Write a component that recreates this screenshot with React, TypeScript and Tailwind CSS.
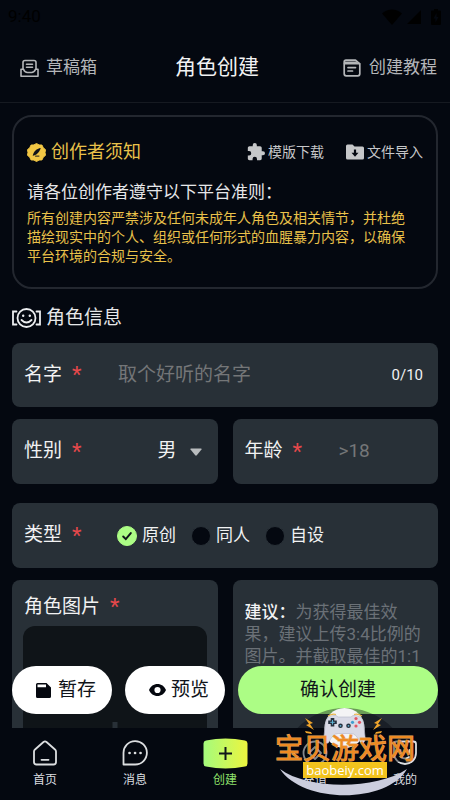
import { useState } from 'react';
import type { ReactNode } from 'react';

const TYPES = ['原创', '同人', '自设'];

function Required() {
  return <span className="ml-2.5 text-[22px] leading-6 text-[#e5484b]">*</span>;
}

function StatusBar() {
  return (
    <div className="flex h-[34px] shrink-0 items-center justify-between px-2 text-[17px] text-black">
      <span>9:40</span>
      <div className="flex items-center gap-1">
        <svg className="h-4 w-5" viewBox="0 0 20 16" fill="currentColor">
          <path d="M0 4.5C6-.8 14-.8 20 4.5L10 16z" />
        </svg>
        <svg className="h-4 w-4" viewBox="0 0 16 16" fill="currentColor">
          <path d="M15 1v14H1z" />
        </svg>
        <svg className="ml-1 h-4 w-3" viewBox="0 0 12 16" fill="currentColor">
          <path fillRule="evenodd" d="M4 0h4v1.500h2q1 0 1 1V15q0 1-1 1H2q-1 0-1-1V2.500q0-1 1-1h2zM6.500 4 3.500 9.500h2V13.500L8.500 8h-2z" />
        </svg>
      </div>
    </div>
  );
}

function Header() {
  return (
    <header className="flex h-[69px] shrink-0 items-center justify-between border-b border-[#161a21] pl-5 pr-[13px]">
      <button className="flex items-center gap-[7px] text-[17px] text-[#b4b6b9]">
        <svg className="size-[19px]" viewBox="0 0 19 19" fill="none" stroke="currentColor" strokeWidth="1.6" strokeLinejoin="round" strokeLinecap="round">
          <path d="M3 10V3.500Q3 1.500 5 1.500h9q2 0 2 2V10" />
          <path d="M3.500 10.200H1v7h17v-7h-2.500q-1.200 3.300-4 3.300h-4q-2.800 0-4-3.300z" />
          <path d="M6.500 5.200h6M6.500 8.200h6" />
        </svg>
        草稿箱
      </button>
      <h1 className="mr-1.5 text-[21px] text-[#f1f2f3]">角色创建</h1>
      <button className="flex items-center gap-2 text-[17px] text-[#b4b6b9]">
        <svg className="size-[18px]" viewBox="0 0 18 18" fill="none" stroke="currentColor" strokeWidth="1.7" strokeLinejoin="round" strokeLinecap="round">
          <path d="M3 1.200h9.500l4.300 3.600V14.800q0 2-2 2H3.200q-2 0-2-2V3Q1.200 1.200 3 1.200z" />
          <path d="M1.500 4.600h15M5 8.600h7.500M5 12h4.500" />
          <path d="M2 2.500h11l2.500 2H2z" fill="currentColor" stroke="none" />
        </svg>
        创建教程
      </button>
    </header>
  );
}

function Notice() {
  return (
    <section className="rounded-[20px] border-2 border-[#23272f] px-[13px] pt-[23px] pb-[21px]">
      <div className="flex h-6 items-center">
        <svg className="size-[19px]" viewBox="0 0 20 20">
          <path
            d="M10 .5 12.700 2l3.100.2 1.300 2.800 2.400 2-.5 3 .5 3-2.400 2-1.300 2.800-3.100.2L10 19.500 7.300 18l-3.100-.2L2.900 15 .5 13l.5-3-.5-3 2.400-2 1.300-2.800L7.300 2z"
            fill="#f2c744"
            stroke="#f2c744"
            strokeLinejoin="round"
          />
          <path d="M14.500 5.200C10 6 7 8.500 6 13.500c3.500-.6 6.800-3 8.500-8.300z" fill="#11141a" />
          <path d="M8.500 13.800h4.500" stroke="#11141a" strokeWidth="1" />
        </svg>
        <h2 className="ml-[5px] text-lg leading-6 text-[#e9c14a]">创作者须知</h2>
        <button className="ml-auto flex items-center gap-[3px] text-sm text-[#c6c7c9]">
          <svg className="size-[18px]" viewBox="1 1 22 22" fill="currentColor">
            <path d="M20.500 11H19V7c0-1.100-.9-2-2-2h-4V3.500a2.500 2.500 0 0 0-5 0V5H4c-1.100 0-2 .9-2 2v3.800h1.500a2.700 2.700 0 0 1 0 5.400H2V20c0 1.100.9 2 2 2h3.800v-1.500a2.700 2.700 0 0 1 5.400 0V22H17c1.100 0 2-.9 2-2v-4h1.500a2.500 2.500 0 0 0 0-5z" />
          </svg>
          模版下载
        </button>
        <button className="ml-[22px] flex items-center gap-[3px] text-sm text-[#c6c7c9]">
          <svg className="h-4 w-[18px]" viewBox="0 0 18 16" fill="currentColor">
            <path
              fillRule="evenodd"
              d="M1.500.5h5l2 2h8Q18 2.500 18 4v10q0 1.500-1.500 1.500h-15Q0 15.500 0 14V2Q0 .5 1.500.5zM7.900 5.500v3.200H5.500L9 12.800l3.500-4.100h-2.400V5.500z"
            />
          </svg>
          文件导入
        </button>
      </div>
      <p className="mt-4 text-[17px] leading-6 text-[#e6e7e9]">请各位创作者遵守以下平台准则：</p>
      <p className="mt-[5px] pr-3 text-sm leading-[19px] text-[#e9c14a]">
        所有创建内容严禁涉及任何未成年人角色及相关情节，并杜绝描绘现实中的个人、组织或任何形式的血腥暴力内容，以确保平台环境的合规与安全。
      </p>
    </section>
  );
}

function InfoForm() {
  const [name, setName] = useState('');
  const [type, setType] = useState(TYPES[0]);

  return (
    <form className="mt-[13px] text-[19px] text-[#f1f2f3]">
      <div className="flex h-16 items-center rounded-lg bg-[#283037] pl-3 pr-[15px]">
        <label htmlFor="name" className="flex w-[94px] shrink-0 items-center">
          名字
          <Required />
        </label>
        <input
          id="name"
          value={name}
          maxLength={10}
          onChange={(e) => setName(e.target.value)}
          placeholder="取个好听的名字"
          className="min-w-0 flex-1 bg-transparent outline-none placeholder:text-[#747678]"
        />
        <span className="text-[15px]">{name.length}/10</span>
      </div>

      <div className="mt-3 grid grid-cols-2 gap-[15px]">
        <div className="flex h-[65px] items-center rounded-lg bg-[#283037] px-3">
          <label htmlFor="gender" className="flex items-center">
            性别
            <Required />
          </label>
          <div className="ml-auto grid items-center">
            <select id="gender" className="col-start-1 row-start-1 w-12 appearance-none bg-transparent pr-6 outline-none">
              <option>男</option>
              <option>女</option>
            </select>
            <svg className="pointer-events-none col-start-1 row-start-1 mr-1 h-2 w-3 justify-self-end" viewBox="0 0 12 8" fill="#b9bcbe">
              <path d="M1 .5h10q1 .2.500 1L6.800 7.300q-.8.800-1.600 0L.5 1.500Q0 .7 1 .5z" />
            </svg>
          </div>
        </div>
        <div className="flex h-[65px] items-center rounded-lg bg-[#283037] px-3">
          <label htmlFor="age" className="flex w-[94px] shrink-0 items-center">
            年龄
            <Required />
          </label>
          <input
            id="age"
            inputMode="numeric"
            placeholder=">18"
            className="min-w-0 flex-1 bg-transparent outline-none placeholder:text-[#747678]"
          />
        </div>
      </div>

      <div role="radiogroup" aria-labelledby="type-label" className="mt-[19px] flex h-[65px] items-center rounded-lg bg-[#283037] px-3">
        <div id="type-label" className="flex w-[93px] shrink-0 items-center">
          类型
          <Required />
        </div>
        <div className="flex gap-[15px] text-[17px]">
          {TYPES.map((item) => (
            <label key={item} className="flex items-center gap-[5px]">
              <span className="relative flex">
                <input
                  type="radio"
                  name="type"
                  value={item}
                  checked={type === item}
                  onChange={() => setType(item)}
                  className="size-5 appearance-none rounded-full border border-[#283037] bg-[#040810] checked:border-[#acfd85] checked:bg-[#acfd85]"
                />
                {type === item && (
                  <svg className="pointer-events-none absolute inset-0 size-5" viewBox="0 0 20 20" fill="none" stroke="#10161a" strokeWidth="2" strokeLinecap="round">
                    <path d="m6.200 10.500 2.600 2.600 5-6" />
                  </svg>
                )}
              </span>
              {item}
            </label>
          ))}
        </div>
      </div>

      <div className="mt-3 grid grid-cols-2 gap-[15px]">
        <div className="rounded-lg bg-[#283037] px-[11px] pt-[15px] pb-3">
          <div className="flex h-6 items-center pl-px">
            角色图片
            <Required />
          </div>
          <button
            type="button"
            aria-label="上传图片"
            className="mt-[7px] flex aspect-3/4 w-full items-center justify-center rounded-xl bg-[#0f1418]"
          >
            <svg className="size-[52px]" viewBox="0 0 52 52" stroke="#283037" strokeWidth="5">
              <path d="M26 0v52M0 26h52" />
            </svg>
          </button>
        </div>
        <p className="rounded-lg bg-[#283037] px-3 pt-[21px] text-[17px] leading-[22px] text-[#6b7177]">
          <b className="font-medium text-[#f1f2f3]">建议：</b>
          为获得最佳效果，建议上传3:4比例的图片。并截取最佳的1:1
        </p>
      </div>
    </form>
  );
}

function ActionBar() {
  return (
    <div className="absolute inset-x-3 bottom-3.5 grid grid-cols-[1fr_1fr_2fr] gap-[13px] text-[19px] text-[#10141a]">
      <button className="flex h-12 items-center justify-center gap-[7px] rounded-full bg-white pl-2">
        <svg className="size-[15px]" viewBox="0 0 15 15" fill="#05080f">
          <path fillRule="evenodd" d="M1.500 0h9L15 4.500v9q0 1.500-1.500 1.500h-12Q0 15 0 13.500v-12Q0 0 1.500 0zM1.500 1.500v2.800h8.500V1.500z" />
        </svg>
        暂存
      </button>
      <button className="flex h-12 items-center justify-center gap-[5px] rounded-full bg-white pl-2">
        <svg className="h-3 w-[17px]" viewBox="0 0 17 12" fill="#05080f">
          <path fillRule="evenodd" d="M8.500 0C4.800 0 1.500 2.300 0 6c1.500 3.700 4.800 6 8.500 6s7-2.300 8.500-6c-1.500-3.700-4.800-6-8.500-6zm0 2.900a3.100 3.100 0 1 1 0 6.200 3.100 3.100 0 0 1 0-6.200z" />
        </svg>
        预览
      </button>
      <button className="h-12 rounded-full bg-[#acfd85]">确认创建</button>
    </div>
  );
}

function Tab({ label, active, children }: { label: string; active?: boolean; children: ReactNode }) {
  return (
    <a href="#" className={active ? 'flex flex-1 flex-col items-center text-[#8fe26c]' : 'flex flex-1 flex-col items-center text-[#dcdee0]'}>
      <span className="flex h-11 items-center justify-center pt-1.5">{children}</span>
      <span className="text-xs leading-4">{label}</span>
    </a>
  );
}

function TabBar() {
  return (
    <nav className="flex h-[72px] shrink-0">
      <Tab label="首页">
        <svg className="size-[26px]" viewBox="0 0 26 26" fill="none" stroke="currentColor" strokeWidth="1.8" strokeLinejoin="round" strokeLinecap="round">
          <path d="M2 11.500q0-1.200 1-2L11.500 2q1.500-1.200 3 0L23 9.500q1 .8 1 2V22q0 2.500-2.500 2.500h-17Q2 24.500 2 22z" />
          <path d="M9.500 19.800h7" />
        </svg>
      </Tab>
      <Tab label="消息">
        <svg className="size-[26px]" viewBox="0 0 26 26" fill="none" stroke="currentColor" strokeWidth="1.800" strokeLinejoin="round">
          <path d="M1.500 24.500V13A11.700 11.700 0 1 1 13.200 24.500z" />
          <path d="M7.500 13h.1M13 13h.1M18.500 13h.1" strokeWidth="2.600" strokeLinecap="round" />
        </svg>
      </Tab>
      <Tab label="创建" active>
        <svg className="h-[31px] w-[45px]" viewBox="0 0 45 31">
          <defs>
            <linearGradient id="create" x1="0" x2="1" y1="0" y2="0">
              <stop offset="0" stopColor="#a5fb7c" />
              <stop offset="1" stopColor="#ecf53f" />
            </linearGradient>
          </defs>
          <path d="M3 2.500Q22.500-1.500 42 2.500q2.500.5 2.500 3v20q0 2.500-2.500 3-19.500 4-39 0-2.500-.5-2.500-3v-20q0-2.500 2.500-3z" fill="url(#create)" />
          <path d="M22.500 9v13M16 15.500h13" stroke="#10161a" strokeWidth="2" />
        </svg>
      </Tab>
      <Tab label="充值">
        <svg className="size-[26px]" viewBox="0 0 26 26" fill="none" stroke="currentColor" strokeWidth="1.800" strokeLinejoin="round">
          <circle cx="13" cy="13" r="11.500" />
          <path d="m13 7 6 6-6 6-6-6z" />
        </svg>
      </Tab>
      <Tab label="我的">
        <svg className="size-[26px]" viewBox="0 0 26 26" fill="none" stroke="currentColor" strokeWidth="1.800" strokeLinecap="round" strokeLinejoin="round">
          <path d="M2 4q0-2.500 2.500-2.500h17Q24 1.500 24 4v9a11 11 0 0 1-22 0z" />
          <path d="M8.500 10v2.500M17.500 10v2.500M9 17q4 3 8 0" />
        </svg>
      </Tab>
    </nav>
  );
}

// site badge floating over the bottom right corner
function SiteBadge() {
  return (
    <a href="#" className="absolute right-[34px] bottom-1 flex w-[142px] flex-col items-center">
      <svg className="pointer-events-none absolute bottom-0 left-0 h-[92px] w-[142px]" viewBox="0 0 142 92">
        <path d="M10 58a61 54 0 0 1 122 0z" fill="#05080f" fillOpacity=".4" />
        <circle cx="70.500" cy="24" r="20" fill="#f4f4f5" />
        <path
          d="M55 13q3-2 7-1.500l2 1.500h13l2-1.500q4-.5 7 1.500 3 1.500 3.800 8l1.400 13q0 6-4.500 5-2.500-5-5-7.500-2-2-5-2h-12.400q-3 0-5 2-2.500 2.500-5 7.500-4.500 1-4.500-5l1.400-13q.8-6.500 3.800-8z"
          fill="#d9dae6"
          stroke="#b3b5c6"
          strokeWidth=".6"
        />
        <path d="M54 12q4-2.500 8-1.500M80 10.500q4-1 8 1.500" fill="none" stroke="#e9b64a" strokeWidth="1.200" />
        <path d="M58.500 14v8.600M54.200 18.300h8.600" stroke="#26313f" strokeWidth="3.600" />
        <path d="M58.500 16v4.600M56.200 18.300h4.600" stroke="#5fb3d4" strokeWidth="1" />
        <circle cx="66.500" cy="21.800" r="2.300" fill="#26313f" />
        <circle cx="74.500" cy="21.800" r="2.300" fill="#26313f" />
        <circle cx="66.500" cy="21.800" r=".9" fill="#5fb3d4" />
        <circle cx="74.500" cy="21.800" r=".9" fill="#5fb3d4" />
        <circle cx="82" cy="14.500" r="1.600" fill="#e25563" />
        <circle cx="82" cy="22" r="1.600" fill="#e25563" />
        <circle cx="78.500" cy="18.300" r="1.600" fill="#3f9fd0" />
        <circle cx="85.500" cy="18.300" r="1.600" fill="#e25563" />
        <path d="m31 14 8 5-3 1 4 6-8-5 3-1zM108 14l-8 5 3 1-4 6 8-5-3-1zM31 27l6 1 1 2-6-1zM108 27l-6 1-1 2 6-1z" fill="#f0a52c" />
        <path d="M6 65c28 21 96 21 127 0-20 35-104 35-127 0z" fill="#cbcddd" />
      </svg>
      <span className="relative text-[28px] leading-6 whitespace-nowrap text-[#ee8a22] [paint-order:stroke_fill] [-webkit-text-stroke:1px_#e9a45a]">
        宝贝游戏网
      </span>
      <span className="relative mb-[18px] bg-[#f2c31d] px-[3px] font-[Open_Sans] text-[13px] leading-4 font-medium text-white">
        baobeiy.com
      </span>
    </a>
  );
}

export default function App() {
  return (
    <div className="relative flex h-dvh flex-col overflow-hidden bg-[#040810] font-[Roboto,'Noto_Sans_CJK_SC',sans-serif]">
      <StatusBar />
      <Header />
      <div className="relative min-h-0 flex-1">
        <main className="h-full overflow-y-auto px-3 pt-3 [scrollbar-width:none]">
          <Notice />
          <div className="mt-[17px] flex h-6 items-center gap-[5px]">
            <svg className="h-5 w-[29px]" viewBox="0 0 29 20" fill="none" stroke="#eceef0" strokeWidth="1.800" strokeLinecap="round">
              <path d="M4.500 3.500H1V16.500H4.500M24.500 3.500H28V16.500H24.500" />
              <circle cx="14.500" cy="10" r="9" />
              <path d="M9.500 12q5 5 10 0" />
              <path d="M11.200 7.600v.2M17.800 7.600v.2" strokeWidth="2.400" />
            </svg>
            <h2 className="text-[19px] text-[#e6e7e9]">角色信息</h2>
          </div>
          <InfoForm />
        </main>
        <ActionBar />
      </div>
      <TabBar />
      <SiteBadge />
    </div>
  );
}
